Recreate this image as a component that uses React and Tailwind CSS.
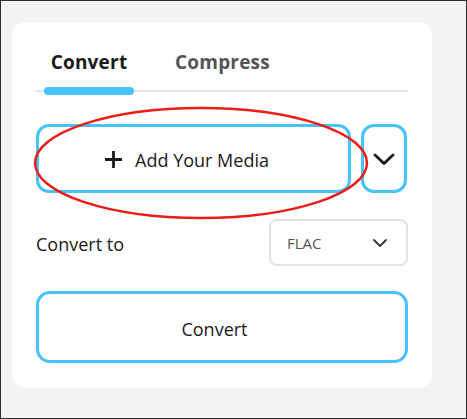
import { ChevronDown } from 'lucide-react';

const App = () => {
  return (
    <div
      className="relative w-[467px] h-[419px] border border-[#2b2b2b] bg-[#f2f3f5] overflow-hidden"
      style={{ fontFamily: '"Open Sans", "Noto Sans", sans-serif' }}
    >
      {/* Card */}
      <div className="ml-[11px] mt-[21px] w-[420px] h-[366px] rounded-[14px] bg-white px-6 pt-[26px]">
        {/* Tabs */}
        <div className="flex items-center h-[26px] pt-[2px]">
          <div className="w-[106px] text-center text-[19px] font-bold tracking-[0.2px] text-[#1a1a1a]">Convert</div>
          <div className="ml-[33px] text-[19px] font-bold tracking-[0.2px] text-[#555]">Compress</div>
        </div>
        <div className="relative mt-[16px] h-[2px] bg-[#dde3e6]">
          <div className="absolute -top-[3px] left-2 w-[90px] h-[8px] rounded-full bg-[#47c2fb]" />
        </div>

        {/* Add media */}
        <div className="mt-[32px] flex gap-[10px]">
          <button className="flex h-[69px] w-[315px] items-center justify-center gap-[13px] rounded-[13px] border-[3px] border-[#47c2fb] pr-[13px] text-[18px] text-[#1a1a1a]">
            <svg width="17" height="17" viewBox="0 0 17 17" className="mt-[1px]">
              <path d="M8.5 0v17M0 8.5h17" stroke="#1a1a1a" strokeWidth="2.8" />
            </svg>
            <span className="pt-[3px]">Add Your Media</span>
          </button>
          <button className="flex h-[69px] w-[46px] items-center justify-center rounded-[13px] border-[3px] border-[#47c2fb]">
            <svg width="22" height="14" viewBox="0 0 22 14">
              <path d="M2 3l9 8.5L20 3" fill="none" stroke="#1a1a1a" strokeWidth="2.8" strokeLinecap="round" strokeLinejoin="round" />
            </svg>
          </button>
        </div>

        {/* Convert to */}
        <div className="mt-[26px] flex items-center justify-between">
          <span className="pt-[4px] text-[18px] text-[#1a1a1a]">Convert to</span>
          <div className="flex h-[47px] w-[139px] items-center justify-between rounded-[8px] border-2 border-[#dde3e6] pl-[16px] pr-[14px]">
            <span className="pt-[2px] text-[15px] text-[#555]">FLAC</span>
            <ChevronDown size={24} strokeWidth={1.8} className="text-[#333]" />
          </div>
        </div>

        {/* Convert button */}
        <button className="mt-[25px] flex h-[72px] w-full items-center justify-center rounded-[14px] border-[3px] border-[#47c2fb] pr-[15px] pt-[5px] text-[18px] text-[#1a1a1a]">
          Convert
        </button>
      </div>

      {/* Red annotation ellipse */}
      <svg className="absolute left-0 top-0 pointer-events-none" width="467" height="419">
        <ellipse cx="200" cy="162" rx="166" ry="55" fill="none" stroke="#ec1c16" strokeWidth="2.5" />
      </svg>
    </div>
  );
};

export default App;
